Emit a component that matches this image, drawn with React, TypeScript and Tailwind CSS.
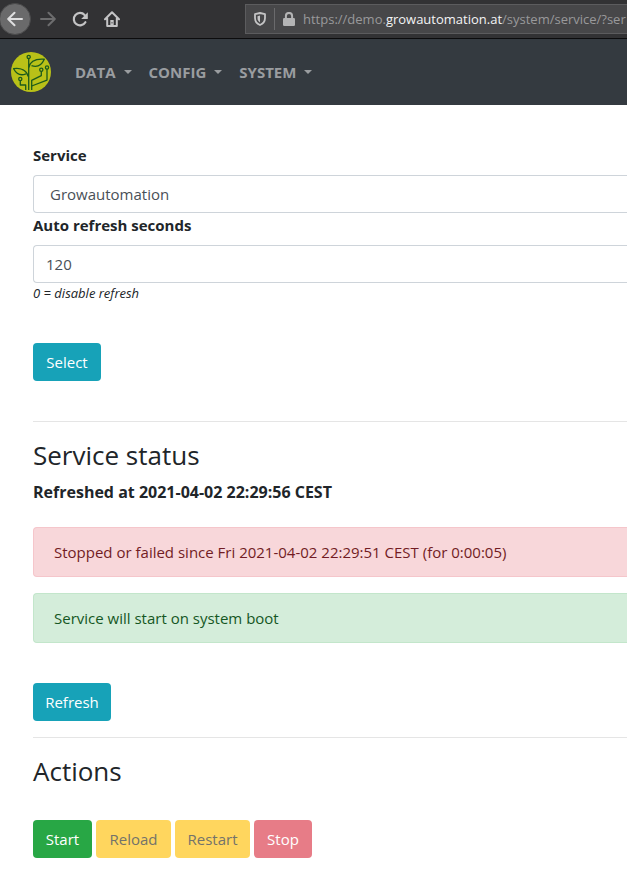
import React from "react";

const menus = ["DATA", "CONFIG", "SYSTEM"];

function Toolbar() {
  return (
    <header className="flex h-[39px] items-center overflow-hidden border-b border-[#0c0c0d] bg-[#323234] text-[#c4c4c5]">
      <button
        aria-label="Back"
        className="-ml-px flex size-8 shrink-0 items-center justify-center rounded-full border border-[#4a4a4b] bg-[#6a6a6b] text-[#dededf]"
      >
        <svg className="size-4" viewBox="0 0 16 16" fill="none" stroke="currentColor" strokeWidth="2" strokeLinecap="round" strokeLinejoin="round">
          <path d="M15 8H1.5M7.5 1.7 1.2 8l6.3 6.3" />
        </svg>
      </button>
      <button aria-label="Forward" className="ml-[9px] shrink-0 text-[#6d6d6e]">
        <svg className="size-4" viewBox="0 0 16 16" fill="none" stroke="currentColor" strokeWidth="2" strokeLinecap="round" strokeLinejoin="round">
          <path d="M1 8h13.5M8.5 1.7 14.8 8l-6.3 6.3" />
        </svg>
      </button>
      <button aria-label="Reload page" className="ml-4 shrink-0">
        <svg className="size-4" viewBox="0 0 16 16" fill="none">
          <path d="M13.4 11.2A6.2 6.2 0 1 1 12.6 3.9" stroke="currentColor" strokeWidth="2.2" strokeLinecap="round" />
          <path d="M15.8 1.2v6.2a.6.6 0 0 1-.6.6H9.2z" fill="currentColor" />
        </svg>
      </button>
      <button aria-label="Home" className="ml-4 shrink-0">
        <svg className="size-4" viewBox="0 0 16 16" fill="none" stroke="currentColor" strokeWidth="2" strokeLinecap="round" strokeLinejoin="round">
          <path d="M1 8.2 8 1.2l7 7M3.2 7.5V15h9.6V7.5" />
          <path d="M8 9v5.5" strokeWidth="3.4" strokeLinecap="butt" />
          <path d="M8 11.2v1.2" stroke="#323234" strokeWidth="1" strokeLinecap="butt" />
        </svg>
      </button>
      <div className="ml-[125px] flex h-[30px] flex-1 items-center overflow-hidden border border-r-0 border-[#5c5c5e] bg-[#474749]">
        <svg className="ml-2 h-[14px] w-3 shrink-0" viewBox="0 0 12 14" fill="none">
          <path d="M6 1 11 2.2V6c0 3.400-2 5.800-5 7C3 11.800 1 9.400 1 6V2.200z" stroke="#c4c4c5" strokeWidth="1.8" strokeLinejoin="round" />
          <path d="M6 3.600v6.800C4.300 9.400 3.500 8 3.500 6V4.200z" fill="#c4c4c5" />
        </svg>
        <span className="ml-2 h-[22px] w-px shrink-0 bg-[#6a6a6c]" />
        <svg className="ml-2 h-[14px] w-3 shrink-0" viewBox="0 0 12 14" fill="none">
          <path d="M2.900 7V4a3.100 3.100 0 0 1 6.200 0v3" stroke="#b4b4b5" strokeWidth="2" />
          <rect y="6" width="12" height="8" rx="1.200" fill="#b4b4b5" />
        </svg>
        <span className="ml-2 whitespace-nowrap text-[13px] leading-5 text-[#99999b]">
          https://demo.<span className="text-[#f4f4f5]">growautomation.at</span>/system/service/?ser
        </span>
      </div>
    </header>
  );
}

function Logo() {
  return (
    <svg className="size-10" viewBox="0 0 40 40" fill="none" stroke="#1b5a1c" strokeWidth="1.3" strokeLinejoin="round">
      <circle cx="20" cy="20" r="20" fill="#b9c118" stroke="none" />
      <circle cx="17.700" cy="4.900" r="1.600" />
      <path d="M17.700 6.500V38" />
      <path d="M17.700 15.500C19 9.500 24 6.500 33.300 7.200 30.500 13.500 25.500 15.300 20.500 13.600" />
      <path d="M17.300 24.500C15.500 18.500 10 15.500 2.600 16.700 5.500 22 10 24 15 21.800" />
      <circle cx="9.300" cy="27" r="1.600" />
      <path d="M9.300 28.600V33h5.400v5" />
      <circle cx="30.300" cy="17.700" r="1.600" />
      <path d="M30.300 19.300v4.400l-9.600 4.600V38" />
      <circle cx="36" cy="15.500" r="1.600" />
      <path d="M36 17.100v11L20.700 34" />
    </svg>
  );
}

function Button({ className, children, ...rest }: React.ComponentProps<"button">) {
  return (
    <button className={`h-[38px] rounded text-center text-[15px] leading-6 ${className}`} {...rest}>
      {children}
    </button>
  );
}

export default function App() {
  return (
    <div className="min-h-screen overflow-hidden bg-white font-['Open_Sans','Noto_Sans',sans-serif] text-[15px] leading-6 text-[#212529]">
      <Toolbar />
      <nav className="flex h-[66px] items-center bg-[#343a40] pl-[11px]">
        <a href="#" aria-label="Growautomation">
          <Logo />
        </a>
        <div className="ml-6 flex gap-[17px]">
          {menus.map((menu) => (
            <button key={menu} className="flex items-center gap-2 font-bold text-[#9a9da0]">
              {menu}
              <span className="border-x-4 border-t-4 border-x-transparent border-t-[#9a9da0]" />
            </button>
          ))}
        </div>
      </nav>

      <main className="pt-[38px] pl-[33px]">
        <form onSubmit={(e) => e.preventDefault()}>
          <label htmlFor="service" className="mb-2 block font-bold">Service</label>
          <select
            id="service"
            className="block h-[38px] w-full appearance-none rounded-l border border-r-0 border-[#ced4da] bg-white pl-4 text-[#495057]"
          >
            <option>Growautomation</option>
          </select>
          <label htmlFor="refresh" className="mb-2 block font-bold">Auto refresh seconds</label>
          <input
            id="refresh"
            type="text"
            defaultValue="120"
            className="block h-[38px] w-full rounded-l border border-r-0 border-[#ced4da] bg-white pl-3 text-[#495057]"
          />
          <p className="text-[13px] leading-5 italic">0 = disable refresh</p>
          <Button type="submit" className="mt-10 w-[68px] bg-[#17a2b8] text-white">Select</Button>
        </form>

        <hr className="mt-10 border-[#e5e5e5]" />
        <h2 className="mt-4 text-[26px] leading-[34px]">Service status</h2>
        <p className="mt-2 text-[16px] leading-6 font-bold">Refreshed at 2021-04-02 22:29:56 CEST</p>
        <div role="alert" className="mt-[23px] rounded-l border border-r-0 border-[#f5c6cb] bg-[#f8d7da] py-3 pl-5 text-[#721c24]">
          Stopped or failed since Fri 2021-04-02 22:29:51 CEST (for 0:00:05)
        </div>
        <div role="status" className="mt-4 rounded-l border border-r-0 border-[#c3e6cb] bg-[#d4edda] py-3 pl-5 text-[#155724]">
          Service will start on system boot
        </div>
        <Button className="mt-10 w-[78px] bg-[#17a2b8] text-white">Refresh</Button>

        <hr className="mt-4 border-[#e5e5e5]" />
        <h2 className="mt-4 text-[26px] leading-[34px]">Actions</h2>
        <div className="mt-8 flex gap-1">
          <Button className="w-[59px] bg-[#28a745] text-white">Start</Button>
          <Button disabled className="w-[75px] bg-[#ffd65e] text-[#73736b]">Reload</Button>
          <Button disabled className="w-[75px] bg-[#ffd65e] text-[#73736b]">Restart</Button>
          <Button disabled className="w-[58px] bg-[#e77c87] text-white">Stop</Button>
        </div>
      </main>
    </div>
  );
}
